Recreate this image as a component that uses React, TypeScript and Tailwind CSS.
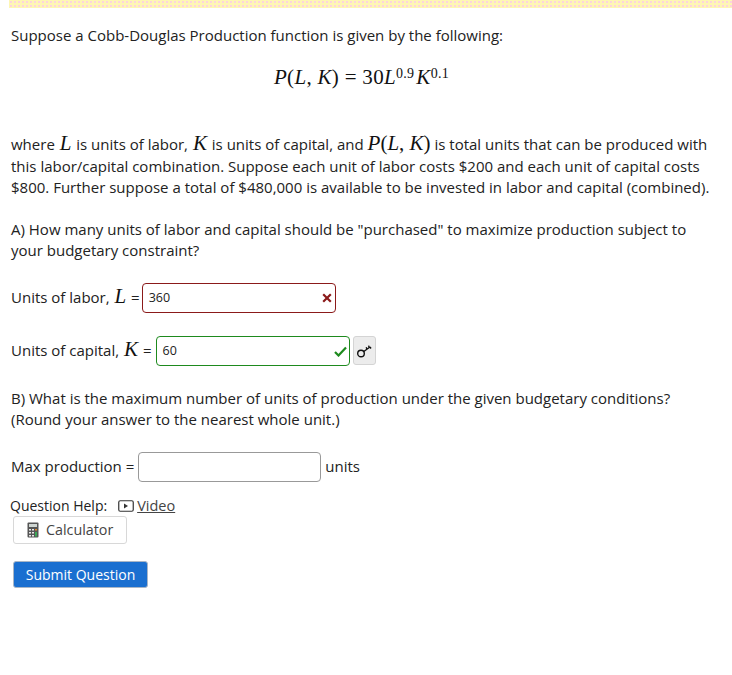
// Cobb-Douglas homework question
function M({ children }: { children: React.ReactNode }) {
  return <span className="mx-px font-['Liberation_Serif',serif] text-[21px] italic leading-[25px] text-[#111]">{children}</span>;
}

function XIcon() {
  return (
    <svg width="10" height="10" viewBox="0 0 10 10" className="absolute right-[3px] top-[9px]">
      <path d="M1.2 1.2 8.8 8.8M8.8 1.2 1.2 8.8" stroke="#8b1a1a" strokeWidth="2.2" fill="none" />
    </svg>
  );
}

function CheckIcon() {
  return (
    <svg width="13" height="11" viewBox="0 0 13 11" className="absolute right-[2px] top-[9px]">
      <path d="M1 6 4.5 9.5 12 1.5" stroke="#1e8a1e" strokeWidth="2.2" fill="none" />
    </svg>
  );
}

function KeyIcon() {
  return (
    <svg width="15" height="14" viewBox="0 0 15 14">
      <circle cx="4" cy="9.500" r="3.300" stroke="#111" strokeWidth="1.400" fill="none" />
      <path d="M6.800 7.500 13 3M10 5.200 9.200 3.200M12.200 3.600 11.600 1.600M13 3 14 4.500" stroke="#111" strokeWidth="1.400" fill="none" />
    </svg>
  );
}

function VideoIcon() {
  return (
    <svg width="16" height="13" viewBox="0 0 16 13" className="mr-[3px]">
      <rect x="0.75" y="0.75" width="14.5" height="10.5" rx="1.5" stroke="#333" strokeWidth="1.2" fill="none" />
      <path d="M6 3.6v4.8l4-2.4z" fill="#333" />
    </svg>
  );
}

function CalcIcon() {
  return (
    <svg width="12" height="16" viewBox="0 0 12 16">
      <rect x="0.5" y="0.5" width="11" height="15" rx="1" fill="#555" />
      <rect x="2" y="2" width="8" height="3" fill="#cfd6d2" />
      <path d="M2 7h2v1.5H2zM5 7h2v1.5H5zM2 10h2v1.5H2zM5 10h2v1.5H5zM2 13h2v1.5H2zM5 13h2v1.500H5z" fill="#e8e8e8" />
      <path d="M8 7h2v1.5H8z" fill="#e08a2e" />
      <path d="M8 10h2v4.500H8z" fill="#3aa655" />
    </svg>
  );
}

export default function App() {
  return (
    <div className="h-[675px] w-[732px] overflow-hidden bg-white font-['Open_Sans',sans-serif] text-[15px] leading-[21.5px] text-[#222]">
      {/* Notice strip, dithered yellow and pink */}
      <div className="ml-[9px] h-[8px] bg-[#fef6b4] bg-[radial-gradient(#fcd5dc_1px,transparent_1px)] bg-[length:4px_4px]" />

      <div className="pl-[11px] pr-[20px]">
        <p className="mt-[17px]">Suppose a Cobb-Douglas Production function is given by the following:</p>

        <p className="mt-[18px] flex h-[26px] items-center justify-center font-['Liberation_Serif',serif] text-[21px] tracking-[0.3px] text-[#111]">
          <span>
            <i>P</i>(<i>L</i>, <i>K</i>) = 30<i>L</i>
            <sup className="top-[-6px] text-[14px]">0.9</sup>
            <i className="ml-[2px]">K</i>
            <sup className="top-[-6px] text-[14px]">0.1</sup>
          </span>
        </p>

        <p className="mt-[40px]">
          where <M>L</M> is units of labor, <M>K</M> is units of capital, and{" "}
          <span className="font-['Liberation_Serif',serif] text-[21px] leading-[25px] text-[#111]">
            <i>P</i>(<i>L</i>, <i>K</i>)
          </span>{" "}
          is total units that can be produced with this labor/capital combination. Suppose each unit of labor costs $200 and each unit of capital costs
          $800. Further suppose a total of $480,000 is available to be invested in labor and capital (combined).
        </p>

        <p className="mt-[20px]">
          A) How many units of labor and capital should be "purchased" to maximize production subject to your budgetary constraint?
        </p>

        <div className="mt-[21px] flex h-[30px] items-center">
          <span className="-mt-[2px]">
            Units of labor, <M>L</M> =
          </span>
          <div className="relative ml-[2px] flex h-[30px] w-[194px] items-center rounded-[4px] border border-[#8b1a1a] pl-[6px] text-[12.5px]">
            360
            <XIcon />
          </div>
        </div>

        <div className="mt-[23px] flex h-[30px] items-center">
          <span className="-mt-[2px]">
            Units of capital, <M>K</M> =
          </span>
          <div className="relative ml-[4px] flex h-[30px] w-[194px] items-center rounded-[4px] border border-[#1e8a1e] pl-[6px] text-[12.5px]">
            60
            <CheckIcon />
          </div>
          <div className="ml-[3px] flex h-[29px] w-[23px] items-center justify-center rounded-[3px] border border-[#d4d4d4] bg-[#ececec]">
            <KeyIcon />
          </div>
        </div>

        <p className="mt-[22px] leading-[21px]">
          B) What is the maximum number of units of production under the given budgetary conditions? (Round your answer to the nearest whole unit.)
        </p>

        <div className="mt-[22px] flex h-[30px] items-center">
          <span>Max production =</span>
          <div className="ml-[4px] h-[30px] w-[183px] rounded-[4px] border border-[#999]" />
          <span className="ml-[4px]">units</span>
        </div>

        <div className="-ml-px mt-[14px] flex h-[21px] items-center text-[14px]">
          <span>Question Help:</span>
          <a className="ml-[11px] flex items-center text-[14.5px] text-[#444] underline">
            <VideoIcon />
            Video
          </a>
        </div>

        <button className="ml-[2px] -mt-px flex h-[28px] w-[114px] items-center gap-[7px] rounded-[3px] border border-[#d8d8d8] pl-[13px] text-[14.3px] text-[#444]">
          <CalcIcon />
          Calculator
        </button>

        <button className="ml-[2px] mt-[17px] flex h-[27px] w-[135px] items-center justify-center rounded-[3px] border border-[#a9b6c6] bg-[#1a6fd0] pt-px text-[14px] text-white">
          Submit Question
        </button>
      </div>
    </div>
  );
}
